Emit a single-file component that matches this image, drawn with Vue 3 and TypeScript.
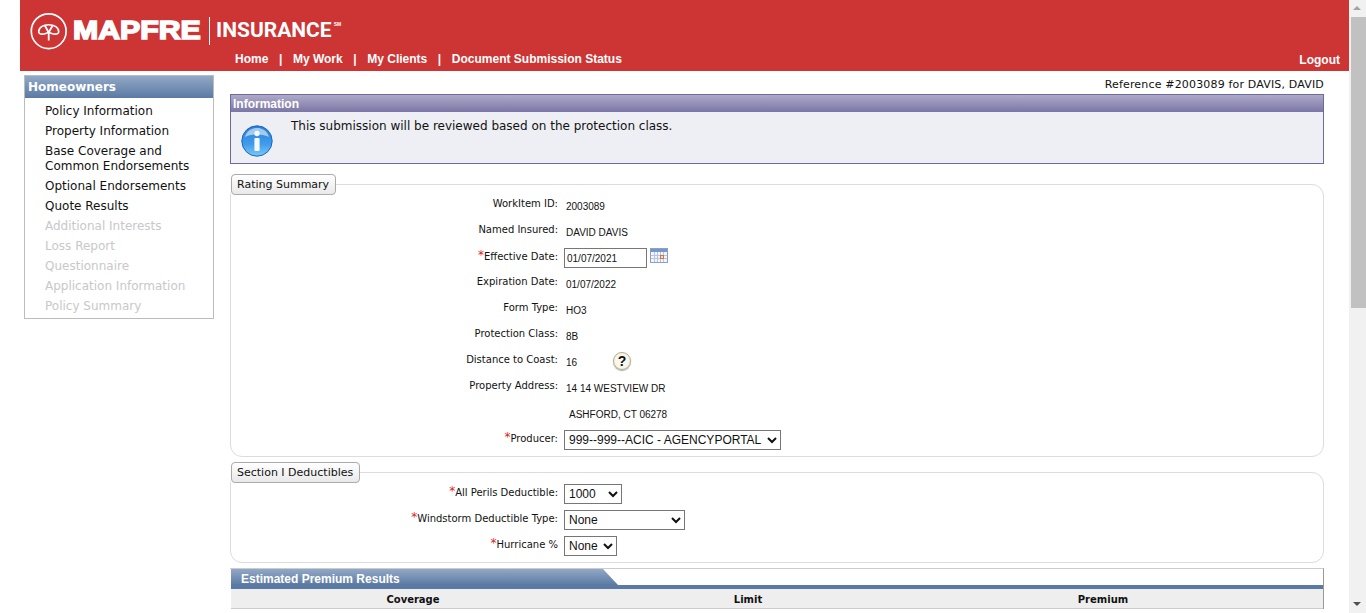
<template>
  <div class="window">
    <div class="page">
      <header class="header">
        <div class="logo">
          <svg class="logo-mark" width="40" height="40" viewBox="29 10.5 40 40" fill="none" stroke="#fff">
            <circle cx="48.7" cy="30.7" r="17.4" stroke-width="1.7" />
            <path d="M38.7 31.3C38.7 27.2 43 24.2 48.7 24.2C54.4 24.2 58.7 27.2 58.7 31.3C58.7 33 57 33.8 55 33.6C52.5 33.4 50.5 32.3 48.7 32C46.9 32.3 44.9 33.4 42.4 33.6C40.4 33.8 38.7 33 38.7 31.3Z" stroke-width="1.6" />
            <path d="M48.7 40V32L44.8 25M48.7 32L52.6 25" stroke-width="1.8" />
          </svg>
          <span class="logo-name">MAPFRE</span>
          <span class="logo-divider"></span>
          <span class="logo-sub">INSURANCE</span>
          <span class="logo-tm">SM</span>
        </div>
        <div class="nav-row">
          <nav class="nav">
            <template v-for="(item, i) in navItems" :key="item">
              <span v-if="i > 0" class="nav-sep">|</span>
              <a class="nav-link">{{ item }}</a>
            </template>
          </nav>
          <a class="logout">Logout</a>
        </div>
      </header>

      <div class="content">
        <aside class="sidebar">
          <h2 class="side-title">Homeowners</h2>
          <ul class="side-list">
            <li v-for="item in sideItems" :key="item.label" :class="{ disabled: item.disabled }" v-html="item.label"></li>
          </ul>
        </aside>

        <main class="main">
          <div class="reference">Reference #2003089 for DAVIS, DAVID</div>

          <section class="info">
            <div class="info-title">Information</div>
            <div class="info-body">
              <svg class="info-icon" width="32" height="32" viewBox="0 0 32 32">
                <defs>
                  <linearGradient id="infoFill" x1="0" y1="0" x2="0" y2="1">
                    <stop offset="0" stop-color="#2b7fd6" />
                    <stop offset="0.6" stop-color="#3f9cec" />
                    <stop offset="1" stop-color="#7cc8f6" />
                  </linearGradient>
                </defs>
                <circle cx="16" cy="16" r="15.2" fill="url(#infoFill)" stroke="#1c68b8" />
                <path d="M4 12C6 5.5 11 3 16 3C21 3 26 5.5 28 12C23 8.5 9 8.5 4 12Z" fill="#fff" opacity="0.55" />
                <circle cx="16" cy="8.5" r="2.7" fill="#f4faff" />
                <rect x="13.4" y="13" width="5.2" height="13" rx="1" fill="#f4faff" />
              </svg>
              <p>This submission will be reviewed based on the protection class.</p>
            </div>
          </section>

          <fieldset class="group rating">
            <legend>Rating Summary</legend>
            <div class="row">
              <label>WorkItem ID:</label>
              <span class="value">2003089</span>
            </div>
            <div class="row">
              <label>Named Insured:</label>
              <span class="value">DAVID DAVIS</span>
            </div>
            <div class="row">
              <label class="req"><i>*</i>Effective Date:</label>
              <span class="control">
                <input class="date" type="text" value="01/07/2021" />
                <svg class="cal" width="18" height="15" viewBox="0 0 18 15">
                  <rect x="0.5" y="0.5" width="17" height="14" fill="#f2f6fc" stroke="#8ba0c4" />
                  <rect x="1" y="1" width="16" height="3" fill="#7597cc" />
                  <path d="M1 7.5H17M1 10.5H17M4.5 4V14M7.5 4V14M10.5 4V14M13.5 4V14" stroke="#b4c6e4" />
                  <rect x="10.5" y="7.5" width="3" height="3" fill="#fbe6d0" stroke="#e0703c" />
                </svg>
              </span>
            </div>
            <div class="row">
              <label>Expiration Date:</label>
              <span class="value">01/07/2022</span>
            </div>
            <div class="row">
              <label>Form Type:</label>
              <span class="value">HO3</span>
            </div>
            <div class="row">
              <label>Protection Class:</label>
              <span class="value">8B</span>
            </div>
            <div class="row">
              <label>Distance to Coast:</label>
              <span class="value coast">16</span>
              <span class="help">?</span>
            </div>
            <div class="row">
              <label>Property Address:</label>
              <span class="value">14 14 WESTVIEW DR</span>
            </div>
            <div class="row">
              <label></label>
              <span class="value indent">ASHFORD, CT 06278</span>
            </div>
            <div class="row">
              <label class="req"><i>*</i>Producer:</label>
              <select class="producer">
                <option>999--999--ACIC - AGENCYPORTAL</option>
              </select>
            </div>
          </fieldset>

          <fieldset class="group deductibles">
            <legend>Section I Deductibles</legend>
            <div class="row">
              <label class="req"><i>*</i>All Perils Deductible:</label>
              <select class="sel-perils"><option>1000</option></select>
            </div>
            <div class="row">
              <label class="req"><i>*</i>Windstorm Deductible Type:</label>
              <select class="sel-wind"><option>None</option></select>
            </div>
            <div class="row">
              <label class="req"><i>*</i>Hurricane %</label>
              <select class="sel-hurricane"><option>None</option></select>
            </div>
          </fieldset>

          <section class="results">
            <div class="tab-row">
              <div class="tab">Estimated Premium Results</div>
            </div>
            <div class="tab-bar"></div>
            <div class="results-head">
              <span>Coverage</span>
              <span>Limit</span>
              <span>Premium</span>
            </div>
          </section>
        </main>
      </div>
    </div>

    <div class="scrollbar">
      <span class="arrow up"></span>
      <div class="thumb"></div>
      <span class="arrow down"></span>
    </div>
  </div>
</template>

<script setup lang="ts">
const navItems = ["Home", "My Work", "My Clients", "Document Submission Status"];

const sideItems = [
  { label: "Policy Information", disabled: false },
  { label: "Property Information", disabled: false },
  { label: "Base Coverage and<br>Common Endorsements", disabled: false },
  { label: "Optional Endorsements", disabled: false },
  { label: "Quote Results", disabled: false },
  { label: "Additional Interests", disabled: true },
  { label: "Loss Report", disabled: true },
  { label: "Questionnaire", disabled: true },
  { label: "Application Information", disabled: true },
  { label: "Policy Summary", disabled: true },
];
</script>

<style>
html,
body {
  margin: 0;
  height: 100%;
  overflow: hidden;
  background: #fff;
}
</style>

<style scoped>
.window {
  display: flex;
  height: 100vh;
  overflow: hidden;
  font-family: "DejaVu Sans", Verdana, sans-serif;
  color: #111;
}

.page {
  flex: 1;
  min-width: 0;
}

.header {
  height: 71px;
  margin-left: 20px;
  background: #cd3434;
  color: #fff;
  display: flex;
  flex-direction: column;
}

.logo {
  display: flex;
  align-items: center;
  box-sizing: border-box;
  height: 51px;
  padding: 10px 0 0 9px;
}

.logo-mark {
  flex: none;
}

.logo-name {
  flex: none;
  margin-left: 4px;
  width: 127px;
  font: 900 25px/1 "Liberation Sans", Arial, sans-serif;
  -webkit-text-stroke: 1.5px #fff;
  transform: scaleX(1.21);
  transform-origin: left center;
}

.logo-divider {
  width: 1px;
  height: 28px;
  margin-left: 9px;
  background: #fff;
}

.logo-sub {
  margin-left: 6px;
  font: 700 21px/1 "Roboto", "Liberation Sans", sans-serif;
}

.logo-tm {
  align-self: flex-start;
  margin: 12px 0 0 2px;
  font: 700 5px/1 "Liberation Sans", sans-serif;
}

.nav-row {
  display: flex;
  justify-content: space-between;
  align-items: center;
  height: 16px;
  padding: 0 9px 0 215px;
  font: 700 12px/16px "Liberation Sans", Arial, sans-serif;
}

.nav {
  display: flex;
}

.nav-sep {
  margin: 0 10.6px;
}

.logout {
  margin-top: 2px;
}

.content {
  display: flex;
  align-items: flex-start;
  padding-left: 24px;
}

.sidebar {
  flex: none;
  width: 190px;
  margin-top: 4px;
  box-sizing: border-box;
  border: 1px solid #bcbcbc;
  height: 244px;
}

.side-title {
  margin: 0;
  height: 22px;
  padding-left: 3px;
  background: linear-gradient(#92a8c6, #5b7aa3);
  color: #fff;
  font: 700 12px/22px "DejaVu Sans", Verdana, sans-serif;
}

.side-list {
  list-style: none;
  margin: 0;
  padding: 3px 0 0 20px;
  font-size: 12px;
  line-height: 15px;
}

.side-list li {
  padding: 3px 0 2px;
}

.side-list .disabled {
  color: #c8c8c8;
}

.main {
  flex: none;
  width: 1094px;
  margin-left: 16px;
}

.reference {
  height: 23px;
  font-size: 11px;
  line-height: 28px;
  letter-spacing: 0.17px;
  text-align: right;
}

.info {
  height: 70px;
  box-sizing: border-box;
  border: 1px solid #6c6a9e;
}

.info-title {
  height: 17px;
  padding-left: 2px;
  background: linear-gradient(#aeaac8, #7a76a6);
  color: #fff;
  font: 700 12px/18px "Liberation Sans", Arial, sans-serif;
}

.info-body {
  display: flex;
  height: 51px;
  background: #eeeff4;
}

.info-icon {
  margin: 13px 0 0 10px;
}

.info-body p {
  margin: 7px 0 0 18px;
  font-size: 12px;
  line-height: 15px;
}

.group {
  position: relative;
  margin: 0;
  min-width: 0;
  padding: 0;
  border: 1px solid #dcdcdc;
  border-radius: 12px;
  box-sizing: border-box;
}

.rating {
  margin-top: 10px;
  height: 283px;
}

.deductibles {
  margin-top: 5px;
  height: 101px;
}

.group legend {
  margin-left: 0;
  padding: 0 6px 0 5px;
  height: 21px;
  box-sizing: border-box;
  border: 1px solid #aaa;
  border-radius: 4px;
  background: linear-gradient(#fff, #e9e9e9);
  font-size: 11px;
  line-height: 20px;
}

.row {
  display: flex;
  align-items: flex-start;
  height: 26px;
  font-size: 10px;
}

.row label {
  flex: none;
  width: 327px;
  text-align: right;
  line-height: 14px;
  padding-top: 2px;
  margin-right: 6px;
}

.row label.req {
  padding-top: 3px;
}

.row label i {
  color: #d22;
  font-style: normal;
  font-size: 12px;
  line-height: 10px;
  vertical-align: 1px;
}

.value {
  margin: 5px 0 0 2px;
  font-family: "Liberation Sans", Arial, sans-serif;
  line-height: 14px;
}

.indent {
  margin-left: 5px;
}

.coast {
  width: 47px;
}

.help {
  width: 18px;
  height: 18px;
  margin-top: 1px;
  box-sizing: border-box;
  border: 1px solid #b5ad8a;
  border-radius: 50%;
  background: radial-gradient(#fff, #f2eeda);
  box-shadow: 0 1px 1px #aaa;
  text-align: center;
  font: 700 14px/16px "Liberation Sans", Arial, sans-serif;
}

.control {
  display: flex;
  align-items: flex-start;
  margin-top: 1px;
}

.date {
  width: 83px;
  height: 20px;
  padding: 2px;
  box-sizing: border-box;
  border: 1px solid #777;
  border-radius: 0;
  font: 10px "Liberation Sans", Arial, sans-serif;
  color: #111;
  outline: none;
}

.cal {
  margin-left: 3px;
}

select {
  height: 20px;
  margin-top: 1px;
  font: 12px "Liberation Sans", Arial, sans-serif;
  color: #111;
  background: #fff;
  border: 1px solid #767676;
  border-radius: 0;
  padding: 0;
}

.producer {
  width: 217px;
}

.sel-perils {
  width: 58px;
}

.sel-wind {
  width: 121px;
}

.sel-hurricane {
  width: 53px;
}

.results {
  margin-top: 5px;
  border-top: 1px solid #ccc;
  border-right: 1px solid #999;
}

.tab-row {
  height: 16px;
  padding-left: 1px;
}

.tab {
  width: 387px;
  height: 16px;
  padding-left: 10px;
  box-sizing: border-box;
  background: linear-gradient(#92a8c6, #5b7aa3);
  clip-path: polygon(0 0, 372px 0, 100% 100%, 0 100%);
  color: #fff;
  font: 700 12px/20px "Liberation Sans", Arial, sans-serif;
}

.tab-bar {
  height: 4px;
  margin-left: 1px;
  background: #5b7aa3;
}

.results-head {
  display: grid;
  grid-template-columns: 364px 306px 404px;
  height: 19px;
  margin-left: 1px;
  background: #eee;
  border-bottom: 1px solid #ccc;
  font: 700 10px/21px "DejaVu Sans", Verdana, sans-serif;
  text-align: center;
}

.scrollbar {
  flex: none;
  width: 17px;
  height: 100%;
  background: #f1f1f1;
  display: flex;
  flex-direction: column;
  align-items: flex-end;
}

.thumb {
  width: 15px;
  height: 291px;
  background: #c1c1c1;
}

.arrow {
  flex: none;
  width: 17px;
  height: 17px;
  box-sizing: border-box;
  position: relative;
}

.arrow::after {
  content: "";
  position: absolute;
  left: 4px;
  border-left: 4px solid transparent;
  border-right: 4px solid transparent;
}

.up::after {
  top: 6px;
  border-bottom: 4px solid #a3a3a3;
}

.down {
  margin-top: auto;
}

.down::after {
  top: 6px;
  border-top: 4px solid #505050;
}
</style>
